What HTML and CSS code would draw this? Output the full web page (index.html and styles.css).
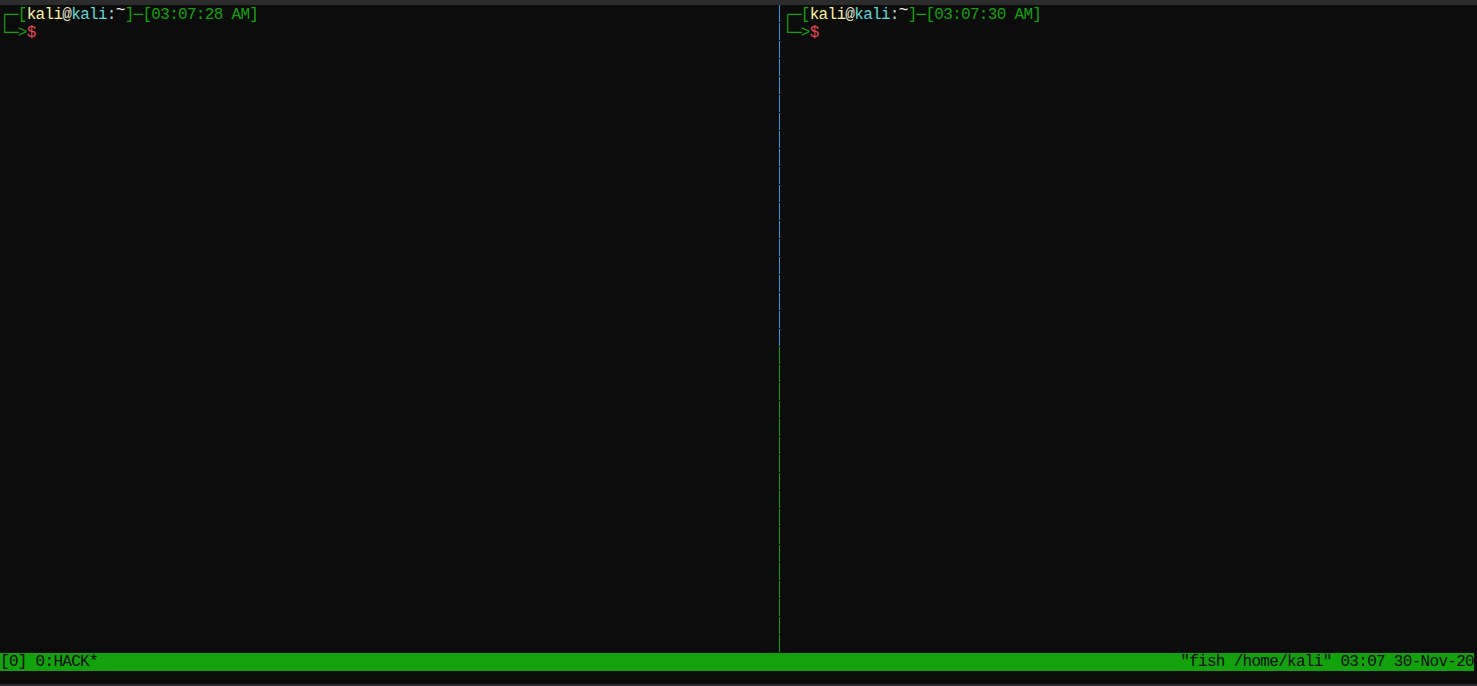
FILE: index.html
```html
<!DOCTYPE html>
<html lang="en">
<head>
    <meta charset="UTF-8">
    <meta name="viewport" content="width=device-width,initial-scale=1" />
    <title>tmux - HACK</title>
    <link rel="stylesheet" href="styles.css">
</head>
<body>
    <div class="topbar"></div>
    <div class="panes">
        <div class="pane">
            <p class="line"><span class="g">┌─[</span><span class="user">kali</span><span class="at">@</span><span class="host">kali</span><span class="colon">:</span><span class="dir">~</span><span class="g">]─[03:07:28 AM]</span></p>
            <p class="line"><span class="g">└─&gt;</span><span class="r">$</span></p>
        </div>
        <div class="divider">
            <i class="seg blue"></i><i class="seg blue"></i><i class="seg blue"></i><i class="seg blue"></i><i class="seg blue"></i>
            <i class="seg blue"></i><i class="seg blue"></i><i class="seg blue"></i><i class="seg blue"></i><i class="seg blue"></i>
            <i class="seg blue"></i><i class="seg blue"></i><i class="seg blue"></i><i class="seg blue"></i><i class="seg blue"></i>
            <i class="seg blue"></i><i class="seg blue"></i><i class="seg blue"></i><i class="seg blue"></i>
            <i class="seg green"></i><i class="seg green"></i><i class="seg green"></i><i class="seg green"></i><i class="seg green"></i>
            <i class="seg green"></i><i class="seg green"></i><i class="seg green"></i><i class="seg green"></i><i class="seg green"></i>
            <i class="seg green"></i><i class="seg green"></i><i class="seg green"></i><i class="seg green"></i><i class="seg green"></i>
            <i class="seg green"></i><i class="seg green"></i>
        </div>
        <div class="pane">
            <p class="line"><span class="g">┌─[</span><span class="user">kali</span><span class="at">@</span><span class="host">kali</span><span class="colon">:</span><span class="dir">~</span><span class="g">]─[03:07:30 AM]</span></p>
            <p class="line"><span class="g">└─&gt;</span><span class="r">$</span></p>
        </div>
    </div>
    <div class="status">
        <span>[0] 0:HACK*</span>
        <span>"fish /home/kali" 03:07 30-Nov-20</span>
    </div>
    <div class="bottom"></div>
</body>
</html>
```

FILE: styles.css
```css
body{
    margin: 0;
    width: 1477px;
    height: 686px;
    overflow: hidden;
    background-color: rgb(12,12,12);
    font-family: "Liberation Mono", "DejaVu Sans Mono", monospace;
    font-size: 16px;
    letter-spacing: -0.7px;
    display: flex;
    flex-direction: column;
}
.topbar{
    height: 5px;
    background-color: rgb(44,44,44);
}
.panes{
    height: 648px;
    display: flex;
}
.pane{
    width: 775px;
}
.pane + .divider + .pane{
    width: auto;
    flex: 1;
}
.divider{
    width: 8px;
    padding-left: 4px;
    box-sizing: border-box;
    display: flex;
    flex-direction: column;
}
/* one cell of the border per terminal row */
.seg{
    display: block;
    width: 1px;
    height: 17px;
    margin-bottom: 1px;
    flex-shrink: 0;
}
/* tmux draws the active pane's half of the border in another colour */
.seg.blue{
    background-color: rgb(58,142,230);
}
.seg.green{
    background-color: rgb(19,161,14);
}
p.line{
    margin: 0;
    height: 18px;
    line-height: 20px;
    white-space: pre;
    color: rgb(204,204,204);
}
.g{
    color: rgb(19,161,14);
}
.r{
    color: rgb(231,72,86);
}
.user{
    color: rgb(249,241,165);
}
.at{
    color: rgb(230,226,200);
}
.host{
    color: rgb(97,214,214);
}
.colon{
    color: rgb(180,210,210);
}
.dir{
    color: rgb(242,242,242);
    line-height: 0;
    vertical-align: 4px;
}
.status{
    width: 1474px;
    height: 18px;
    line-height: 19px;
    background-color: rgb(19,161,14);
    color: rgb(12,12,12);
    display: flex;
    justify-content: space-between;
    white-space: pre;
}
.bottom{
    flex: 1;
    border-bottom: 2px solid rgb(40,44,50);
}
```
